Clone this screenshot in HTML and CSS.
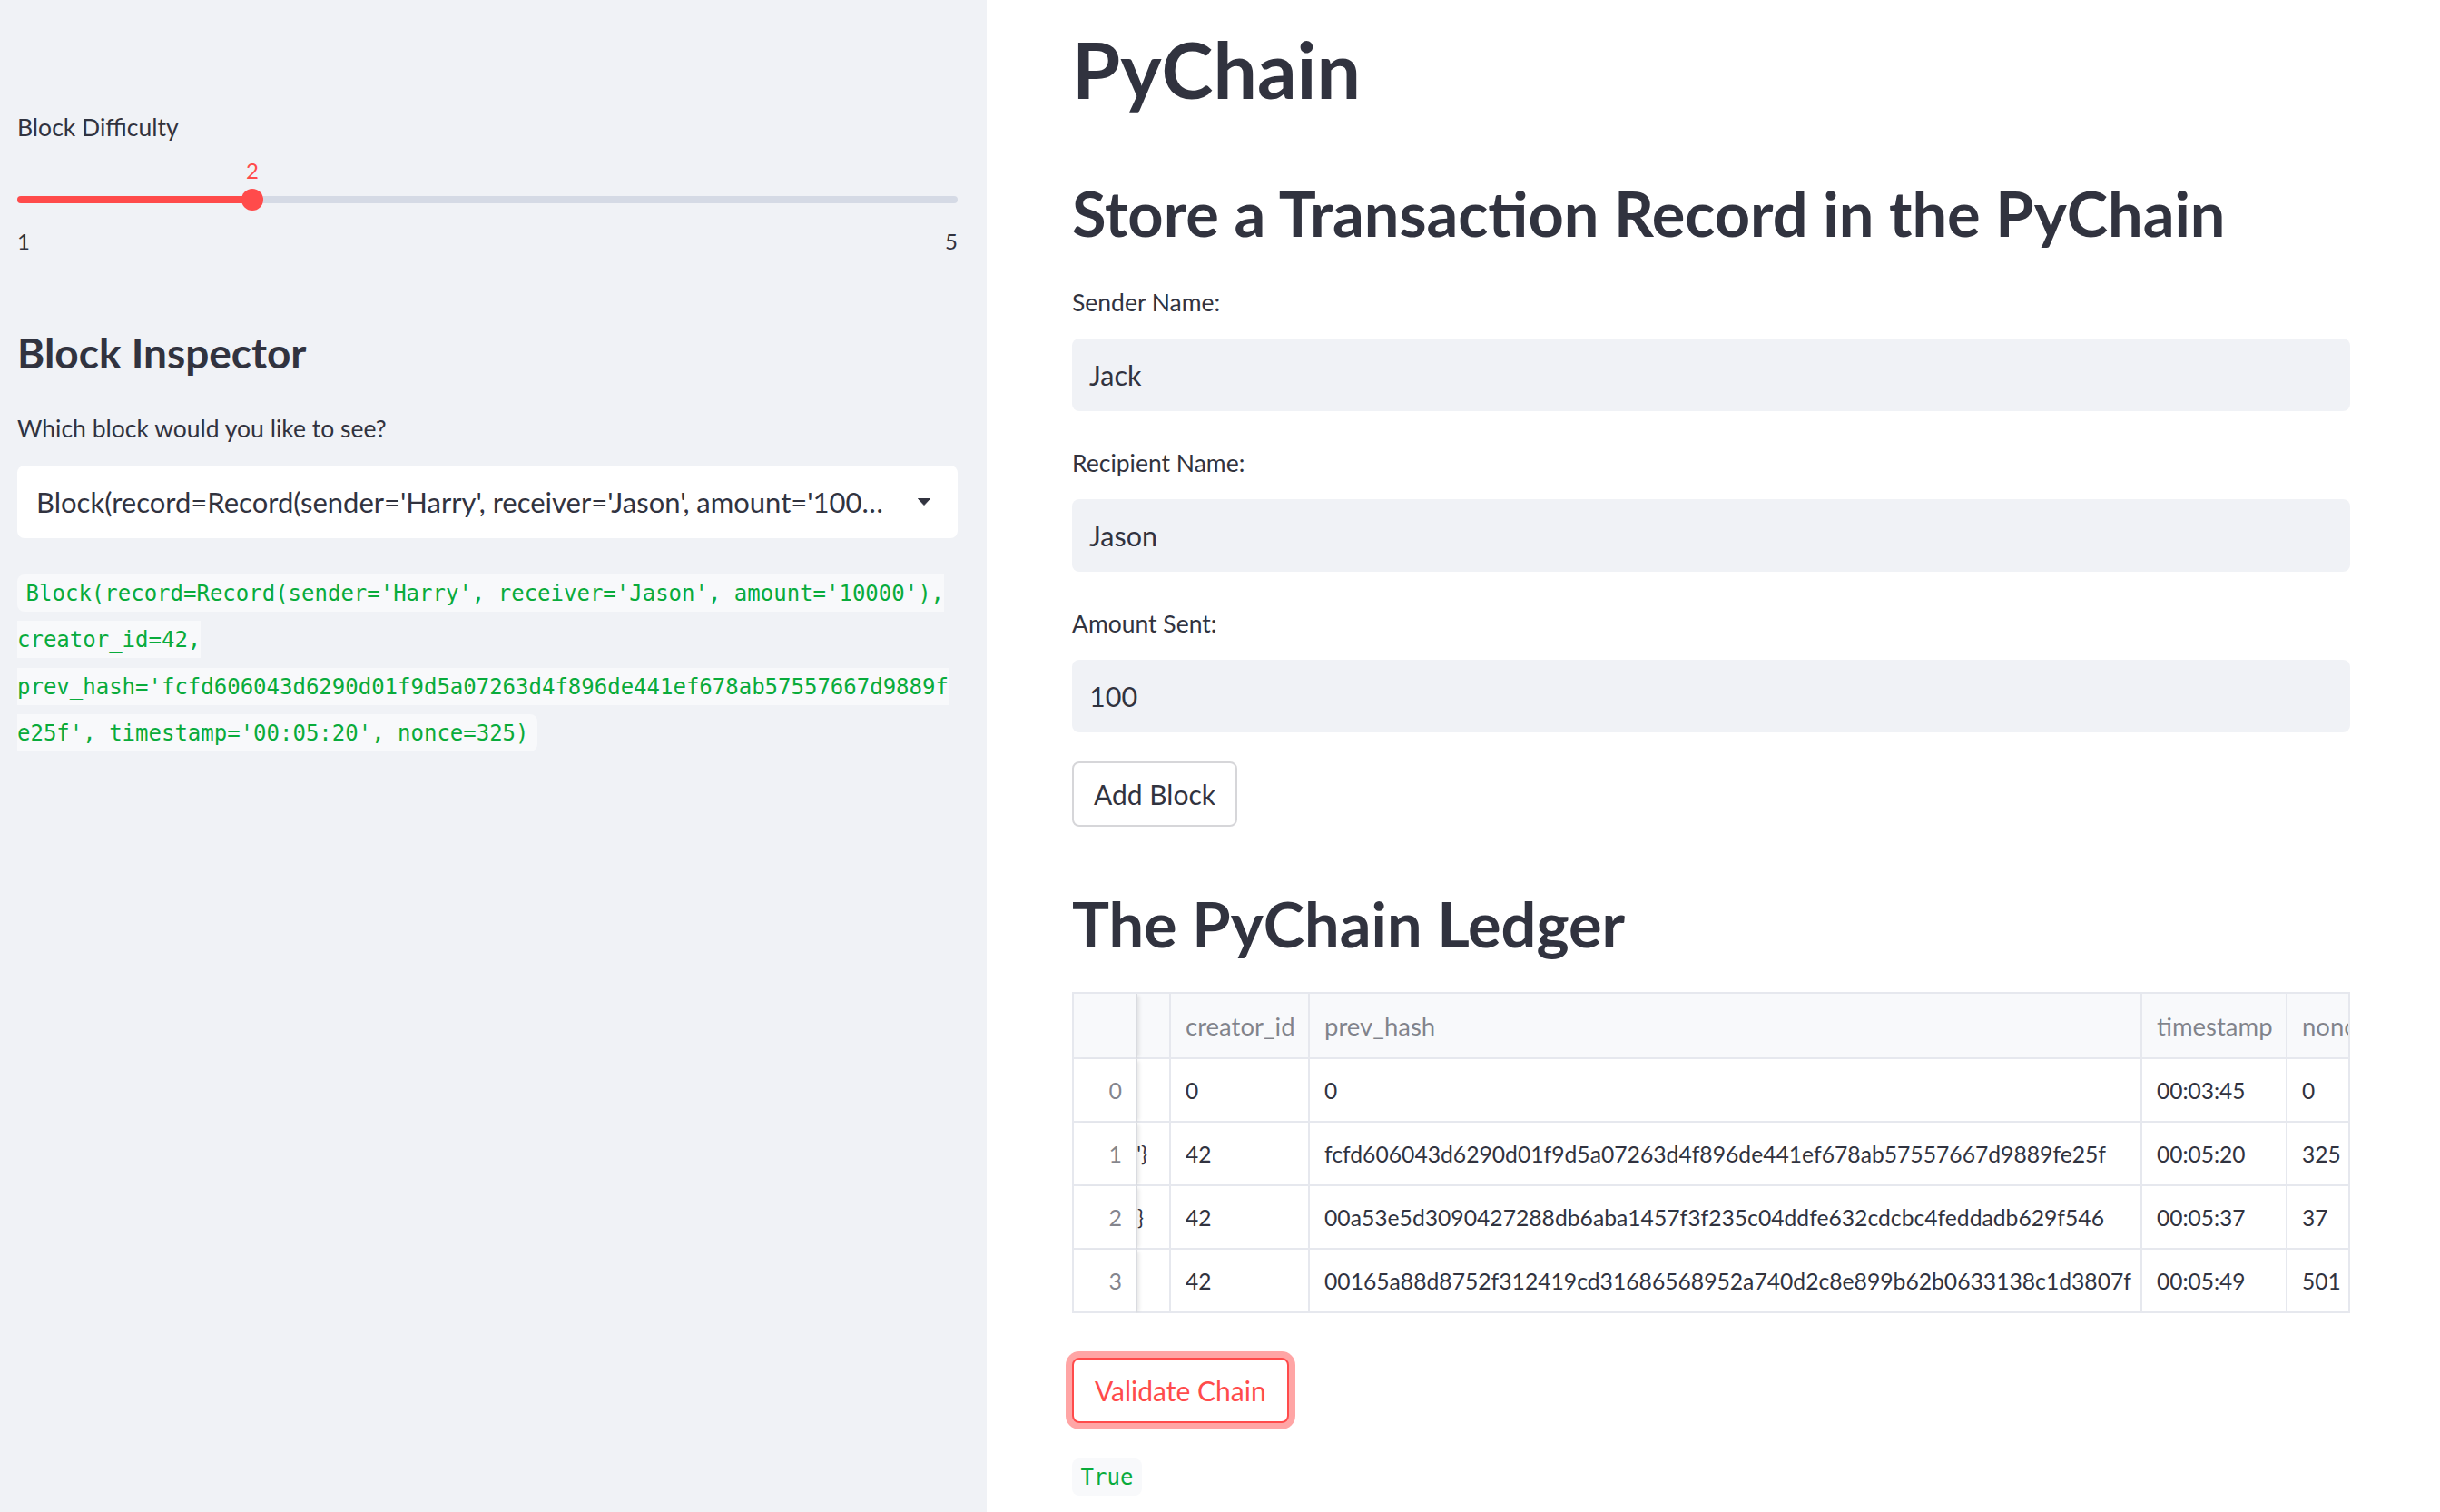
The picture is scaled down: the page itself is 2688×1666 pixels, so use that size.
FILE: index.html
```html
<!DOCTYPE html>
<html lang="en">
<head>
<meta charset="utf-8">
<title>PyChain</title>
<link rel="stylesheet" href="styles.css">
</head>
<body>
<div class="app">
  <aside class="sidebar">
    <label class="wlabel">Block Difficulty</label>
    <div class="slider">
      <div class="slider-fill" style="width:25%"></div>
      <div class="slider-thumb" style="left:25%"><span class="thumb-val">2</span></div>
    </div>
    <div class="ticks"><span>1</span><span>5</span></div>

    <h2 class="sb-h2">Block Inspector</h2>
    <label class="wlabel q">Which block would you like to see?</label>
    <div class="select">
      <span class="select-text">Block(record=Record(sender='Harry', receiver='Jason', amount='100…</span>
      <svg class="caret" width="14" height="8" viewBox="0 0 14 8"><path d="M0.5 0.5h13L7 7.5z" fill="#31333f" stroke="#31333f" stroke-width="1" stroke-linejoin="round"/></svg>
    </div>
    <p class="codep"><code>Block(record=Record(sender='Harry', receiver='Jason', amount='10000'), creator_id=42, prev_hash='fcfd606043d6290d01f9d5a07263d4f896de441ef678ab57557667d9889fe25f', timestamp='00:05:20', nonce=325)</code></p>
  </aside>

  <main class="main">
    <h1 class="h1">PyChain</h1>
    <h2 class="h2 first">Store a Transaction Record in the PyChain</h2>

    <div class="field first">
      <label class="wlabel">Sender Name:</label>
      <div class="input">Jack</div>
    </div>
    <div class="field">
      <label class="wlabel">Recipient Name:</label>
      <div class="input">Jason</div>
    </div>
    <div class="field">
      <label class="wlabel">Amount Sent:</label>
      <div class="input">100</div>
    </div>

    <button class="btn add">Add Block</button>

    <h2 class="h2 ledger">The PyChain Ledger</h2>

    <div class="table">
      <div class="row head">
        <div class="cell idx"></div>
        <div class="cell part"></div>
        <div class="cell">creator_id</div>
        <div class="cell">prev_hash</div>
        <div class="cell">timestamp</div>
        <div class="cell last">nonce</div>
      </div>
      <div class="row">
        <div class="cell idx">0</div>
        <div class="cell part"></div>
        <div class="cell num">0</div>
        <div class="cell num">0</div>
        <div class="cell num">00:03:45</div>
        <div class="cell num last">0</div>
      </div>
      <div class="row">
        <div class="cell idx">1</div>
        <div class="cell part"><span class="part-text p1">0'}</span></div>
        <div class="cell num">42</div>
        <div class="cell hash">fcfd606043d6290d01f9d5a07263d4f896de441ef678ab57557667d9889fe25f</div>
        <div class="cell num">00:05:20</div>
        <div class="cell num last">325</div>
      </div>
      <div class="row">
        <div class="cell idx">2</div>
        <div class="cell part"><span class="part-text p2">'}</span></div>
        <div class="cell num">42</div>
        <div class="cell hash">00a53e5d3090427288db6aba1457f3f235c04ddfe632cdcbc4feddadb629f546</div>
        <div class="cell num">00:05:37</div>
        <div class="cell num last">37</div>
      </div>
      <div class="row">
        <div class="cell idx">3</div>
        <div class="cell part"></div>
        <div class="cell num">42</div>
        <div class="cell hash">00165a88d8752f312419cd31686568952a740d2c8e899b62b0633138c1d3807f</div>
        <div class="cell num">00:05:49</div>
        <div class="cell num last">501</div>
      </div>
    </div>

    <button class="btn validate">Validate Chain</button>

    <p class="codep result"><code>True</code></p>
  </main>
</div>
</body>
</html>
```

FILE: styles.css
```css
* { box-sizing: border-box; }

html, body {
  margin: 0;
  padding: 0;
  background: #ffffff;
}

body {
  font-family: Lato, "Noto Sans", sans-serif;
  color: #31333f;
}

.app {
  display: flex;
  width: 2688px;
  height: 1666px;
  overflow: hidden;
}

/* ---------- sidebar ---------- */
.sidebar {
  flex: 0 0 1087px;
  width: 1087px;
  background: #f0f2f6;
  padding: 120px 32px 0 19px;
}

.wlabel {
  display: block;
  font-size: 26.5px;
  line-height: 40px;
  white-space: nowrap;
}

.slider {
  position: relative;
  margin-top: 56px;
  height: 8px;
  border-radius: 4px;
  background: #d5dae5;
}

.slider-fill {
  height: 100%;
  border-radius: 4px;
  background: #ff4b4b;
}

.slider-thumb {
  position: absolute;
  top: 50%;
  width: 24px;
  height: 24px;
  margin: -12px 0 0 -12px;
  border-radius: 50%;
  background: #ff4b4b;
}

.thumb-val {
  position: absolute;
  left: 50%;
  bottom: calc(100% + 5px);
  transform: translateX(-50%);
  font-size: 24px;
  line-height: 30px;
  color: #ff4b4b;
}

.ticks {
  display: flex;
  justify-content: space-between;
  margin-top: 24px;
  font-size: 24px;
  line-height: 36px;
}

.sb-h2 {
  margin: 77px 0 0;
  font-size: 46px;
  font-weight: 700;
  line-height: 56px;
}

.wlabel.q {
  margin-top: 35px;
}

.select {
  display: flex;
  align-items: center;
  margin-top: 21px;
  height: 80px;
  background: #ffffff;
  border-radius: 8px;
  padding: 0 30px 0 21px;
}

.select-text {
  font-size: 31px;
  white-space: nowrap;
  overflow: hidden;
}

.caret {
  margin-left: auto;
  flex: 0 0 auto;
}

.codep {
  margin: 35px 4px 0 0;
  font-family: "DejaVu Sans Mono", "Liberation Mono", monospace;
  font-size: 24px;
  line-height: 51.5px;
  overflow-wrap: break-word;
}

.codep code {
  font-family: inherit;
  color: #09ab3b;
  background: #f8f9fb;
  padding: 6.5px 9.6px;
  border-radius: 8px;
}

/* ---------- main ---------- */
.main {
  flex: 1 1 auto;
  padding: 26px 99px 0 94px;
}

.h1 {
  margin: 0;
  font-size: 86px;
  font-weight: 700;
  line-height: 100px;
}

.h2 {
  margin: 0;
  font-size: 68.5px;
  font-weight: 700;
  line-height: 90px;
}

.h2.first { margin-top: 64px; }

.field { margin-top: 37px; }
.field.first { margin-top: 33px; }

.field .wlabel { line-height: 41px; }

.input {
  display: flex;
  align-items: center;
  margin-top: 19px;
  height: 80px;
  padding-left: 19px;
  background: #f0f2f6;
  border-radius: 8px;
  font-size: 30.5px;
}

.btn {
  display: block;
  height: 72px;
  background: #ffffff;
  border: 2px solid #d6d6d9;
  border-radius: 8px;
  font-family: inherit;
  font-size: 30px;
  color: #31333f;
  padding: 0 22px;
}

.btn.add { margin-top: 32px; }

.h2.ledger { margin-top: 62px; }

.table {
  margin-top: 30px;
  width: 1408px;
  border-top: 2px solid #e6e8ee;
  border-left: 2px solid #e6e8ee;
  border-right: 2px solid #e6e8ee;
  overflow: hidden;
  font-size: 27.5px;
}

.row {
  display: grid;
  grid-template-columns: 70px 37px 153px 917px 160px 67px;
  height: 70px;
}

.row.head {
  height: 72px;
  background: #f8f9fb;
  color: rgba(49, 51, 63, 0.6);
}

.cell {
  display: flex;
  align-items: center;
  padding-left: 16px;
  border-right: 2px solid #e6e8ee;
  border-bottom: 2px solid #e6e8ee;
  white-space: nowrap;
  overflow: hidden;
}

.cell.num { font-size: 24.5px; }
.cell.hash { font-size: 24.7px; }

.cell.last { border-right: none; }

.cell.idx {
  position: relative;
  z-index: 1;
  justify-content: flex-end;
  padding: 0 15px 0 0;
  font-size: 25px;
  color: rgba(49, 51, 63, 0.6);
  background: #ffffff;
  border-right: 2px solid #d9dbe0;
  box-shadow: 4px 0 4px -2px rgba(0, 0, 0, 0.10);
}

.row.head .cell.idx { background: #f8f9fb; }

.cell.part {
  justify-content: flex-end;
  padding: 0;
  font-size: 23px;
}

.part-text.p1 { padding-right: 24px; }
.part-text.p2 { padding-right: 28px; }

.btn.validate {
  margin-top: 49px;
  color: #ff4b4b;
  border-color: #ff4b4b;
  box-shadow: 0 0 0 7px rgba(255, 75, 75, 0.5);
  padding: 0 23px;
}

.codep.result {
  margin-top: 34px;
}
```
